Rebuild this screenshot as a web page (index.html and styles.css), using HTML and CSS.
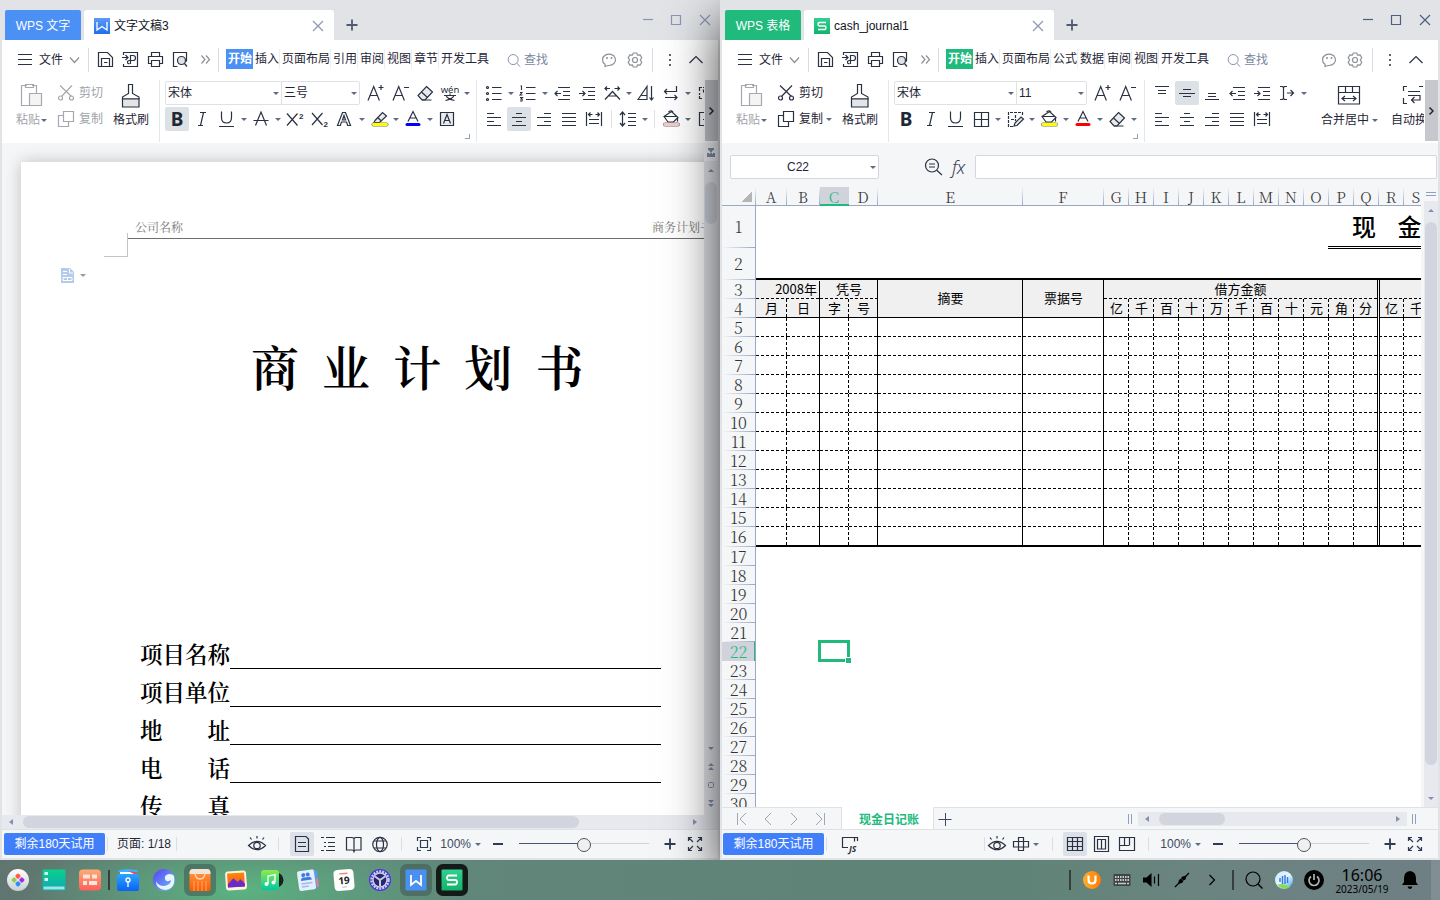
FILE: index.html
```html
<!DOCTYPE html>
<html lang="zh-CN">
<head>
<meta charset="utf-8">
<title>WPS Office</title>
<link rel="stylesheet" href="styles.css">
</head>
<body>
<svg class="sprite" aria-hidden="true">
  <defs>
    <linearGradient id="gw" x1="0" y1="0" x2="0" y2="1"><stop offset="0" stop-color="#5b9bf8"/><stop offset="1" stop-color="#1f6fe8"/></linearGradient>
    <linearGradient id="gs" x1="0" y1="0" x2="0" y2="1"><stop offset="0" stop-color="#33cf90"/><stop offset="1" stop-color="#11b36c"/></linearGradient>
    <linearGradient id="ggreen" x1="0" y1="0" x2="0" y2="1"><stop offset="0" stop-color="#0ad18b"/><stop offset="1" stop-color="#0fa8b8"/></linearGradient>
    <linearGradient id="gcoral" x1="0" y1="0" x2="0" y2="1"><stop offset="0" stop-color="#ffab74"/><stop offset="1" stop-color="#ff5f5c"/></linearGradient>
    <linearGradient id="gblue" x1="0" y1="0" x2="0" y2="1"><stop offset="0" stop-color="#2aa5ff"/><stop offset="1" stop-color="#0b62f4"/></linearGradient>
    <linearGradient id="gwave" x1="0" y1="0" x2="1" y2="1"><stop offset="0" stop-color="#5a3ff0"/><stop offset="1" stop-color="#69c4ff"/></linearGradient>
    <linearGradient id="gbag" x1="0" y1="0" x2="0" y2="1"><stop offset="0" stop-color="#ff9a45"/><stop offset="1" stop-color="#ff5a00"/></linearGradient>
    <linearGradient id="gpic" x1="0" y1="0" x2="0" y2="1"><stop offset="0" stop-color="#ff8a00"/><stop offset="1" stop-color="#f0503c"/></linearGradient>
    <linearGradient id="gmus" x1="0" y1="0" x2="0" y2="1"><stop offset="0" stop-color="#8cec4e"/><stop offset="1" stop-color="#00c8a0"/></linearGradient>
    <linearGradient id="gball" x1="0" y1="0" x2="0" y2="1"><stop offset="0" stop-color="#ffffff"/><stop offset="1" stop-color="#c9cfd1"/></linearGradient>
    <linearGradient id="gvoice" x1="0" y1="0" x2="1" y2="1"><stop offset="0" stop-color="#c5e7ff"/><stop offset=".5" stop-color="#e8f7ff"/><stop offset="1" stop-color="#2fa0f5"/></linearGradient>
    <linearGradient id="gu" x1="0" y1="0" x2="1" y2="0"><stop offset="0" stop-color="#ffae2b"/><stop offset="1" stop-color="#ff7a00"/></linearGradient>
  </defs>
  <symbol id="menu" viewBox="0 0 24 24"><path d="M5 6.500h14M5 11.500h14M5 16.500h14"/></symbol>
  <symbol id="chev" viewBox="0 0 24 24"><path d="M7 9.500l4.500 5 4.500-5"/></symbol>
  <symbol id="save" viewBox="0 0 24 24"><path d="M5.500 4.500h9l5 5v9h-14zM8.500 18.500v-8h8v8M11 14.500h3.500"/></symbol>
  <symbol id="pdf" viewBox="0 0 24 24"><path d="M5.500 7V4.500h14v14h-14V16M4 9.500h6M7.500 7l2.500 2.500L7.500 12M12.500 16v-8.500H15q2.500 0 2.500 2.500T15 12.500h-3.500q-2 0-2 1.800t2 1.200"/></symbol>
  <symbol id="print" viewBox="0 0 24 24"><path d="M8.500 8.500v-4h8v4M8.500 15.500h-3v-7h14v7h-3M8.500 12.500h8v6h-8z"/></symbol>
  <symbol id="preview" viewBox="0 0 24 24"><path d="M9.500 18.500h-4v-14h13v9"/><circle cx="13.500" cy="12.500" r="4" fill="#dfe2e6"/><path d="M16.500 15.500l2.500 3"/></symbol>
  <symbol id="dbl" viewBox="0 0 24 24"><path d="M8.500 7.500l3.500 4-3.500 4M13 7.500l3.500 4-3.500 4"/></symbol>
  <symbol id="find" viewBox="0 0 24 24"><circle cx="11" cy="11.500" r="6"/><path d="M15.500 16l4 4"/></symbol>
  <symbol id="smile" viewBox="0 0 24 24"><path d="M8 18.500v-2.200A6.500 5.700 0 1 1 12 17.500q-1.500 0-4 1z"/><path d="M10 9v2M14.500 9v2" stroke-width="1.500"/></symbol>
  <symbol id="gear" viewBox="0 0 24 24"><path d="M10.300 5h3.400l.9 2.200 2.500-.3 1.700 2.900L17.300 12l1.500 2.200-1.700 2.900-2.500-.3-.9 2.200h-3.400l-.9-2.200-2.500.3-1.700-2.900L6.700 12 5.200 9.800l1.700-2.900 2.500.3z"/><circle cx="12" cy="12" r="2.500"/></symbol>
  <symbol id="dots" viewBox="0 0 24 24"><path d="M12 6v2M12 11v2M12 16v2" stroke-width="2" stroke="#5b6477"/></symbol>
  <symbol id="up" viewBox="0 0 24 24"><path d="M5.500 15l6.500-6.500 6.500 6.500"/></symbol>
  <symbol id="x" viewBox="0 0 24 24"><path d="M7 7l10 10M17 7L7 17"/></symbol>
  <symbol id="min" viewBox="0 0 24 24"><path d="M7 11.500h10"/></symbol>
  <symbol id="max" viewBox="0 0 24 24"><path d="M7.500 7.500h9v9h-9z"/></symbol>
  <symbol id="paste" viewBox="0 0 24 26"><path d="M8 3.500H2.500v20h8M13 3.500h4.500V11M6.500 2.500h8v3h-8z"/><path d="M10.500 11.500h12v12h-12z" fill="#f4f4f5"/></symbol>
  <symbol id="cut" viewBox="0 0 24 24"><path d="M6 4.500l11.500 11M18 4.500L7.500 15.500"/><circle cx="6.500" cy="17" r="2"/><circle cx="17.500" cy="17" r="2"/></symbol>
  <symbol id="copy" viewBox="0 0 24 24"><path d="M9.500 4.500h10v10h-10zM9.500 8.500h-5v11h10v-5"/></symbol>
  <symbol id="brush" viewBox="0 0 24 26"><path d="M9.500 11.500V2.500h4v9l6.500 3.500v2H3.500v-2z" fill="#fff"/><path d="M3.500 17h16.500v8H3.500z" fill="#e3e6e8"/></symbol>
  <symbol id="ap" viewBox="0 0 24 24"><path d="M5 19.500L10.700 5.500l5.700 14M7 14.500h7.500M15.500 6.500h5M18 4v5"/></symbol>
  <symbol id="am" viewBox="0 0 24 24"><path d="M5 19.500L10.700 5.500l5.700 14M7 14.500h7.500M16 6.500h5"/></symbol>
  <symbol id="erase" viewBox="0 0 24 24"><path d="M13.500 5.500l6 5.500-7.500 8H9l-4-4.500z" fill="#e7eaec"/><path d="M8.500 11l6 5.500M9 19h9.500"/></symbol>
  <symbol id="bul" viewBox="0 0 24 24"><circle cx="5.500" cy="6.500" r="1"/><circle cx="5.500" cy="12.500" r="1"/><circle cx="5.500" cy="18.500" r="1"/><path d="M10 6.500h9.500M10 12.500h9.500M10 18.500h9.500"/></symbol>
  <symbol id="num" viewBox="0 0 24 24"><path d="M4.500 5h1v4M4 11.500h2l-2 2.500h2.500M4 16.500h2.500l-1.500 1.500q2 0 1 2H4" stroke-width="1.100"/><path d="M10 6.500h9.500M10 12.500h9.500M10 18.500h9.500"/></symbol>
  <symbol id="out" viewBox="0 0 24 24"><path d="M8 6.500h12M13 10.500h7M13 14.500h7M8 18.500h12M5 12.500h6M7.500 10L5 12.500 7.500 15"/></symbol>
  <symbol id="ind" viewBox="0 0 24 24"><path d="M8 6.500h12M13 10.500h7M13 14.500h7M8 18.500h12M4 12.500h6M7.500 10l2.500 2.500L7.500 15"/></symbol>
  <symbol id="scale" viewBox="0 0 24 24"><path d="M5 18.500l7.500-8 7.500 8M8.500 15h8M5 7.500h5M14.500 7.500h5M7 5.500L5 7.500l2 2M17.500 5.500l2 2-2 2"/></symbol>
  <symbol id="sort" viewBox="0 0 24 24"><path d="M4 18.500l9-13v13zM7.500 14.500H13M17.500 5v14M15.500 16.500l2 2.500 2-2.500"/></symbol>
  <symbol id="wrap" viewBox="0 0 24 24"><path d="M17.500 5v5.500h-12M8 8l-2.500 2.500L8 13M6 16.500h12M15.500 14l2.500 2.500-2.500 2.500"/></symbol>
  <symbol id="tab" viewBox="0 0 24 24"><path d="M6.500 10V6.500H9M10 6.500h4M6.500 12v2M6.500 15v2.500H9M10.500 8.500v3"/></symbol>
  <symbol id="frame" viewBox="0 0 24 24"><path d="M20 5.500H6.500v13H20M10 12.500h2"/></symbol>
  <symbol id="I" viewBox="0 0 24 24"><path d="M10 5.500h6M8 18.500h5M13.500 5.500l-3 13"/></symbol>
  <symbol id="U" viewBox="0 0 24 24"><path d="M6.500 4.500v6q0 5.500 5 5.500t5-5.500v-6M4 19.500h15"/></symbol>
  <symbol id="strike" viewBox="0 0 24 24"><path d="M6.500 18.500L12 5l5.500 13.500M4.500 13.500h15"/></symbol>
  <symbol id="outA" viewBox="0 0 24 24"><path d="M4.500 18.500L9.500 5.500h3l5 13h-2.800l-1.200-3.500h-5L7.300 18.500zM9.500 13h3L11 8.500z"/></symbol>
  <symbol id="hl" viewBox="0 0 24 24"><path d="M8 13.500l7.500-8 4 3.500-7 6.500H7z" fill="#e7eaec"/><path d="M10.500 10.500l4 3.500"/><path d="M6.500 17.500h13" stroke="#777" stroke-width="4" stroke-linecap="round"/><path d="M6.500 17.500h13" stroke="#ff0" stroke-width="2.800" stroke-linecap="round"/></symbol>
  <symbol id="fc" viewBox="0 0 24 24"><path d="M7 14.500L12 4.500l5 10M9 11h6"/><path d="M6 17.500h12" class="bar" stroke-width="3" stroke-linecap="round"/></symbol>
  <symbol id="boxA" viewBox="0 0 24 24"><path d="M5.500 5.500h13v13h-13z" fill="#e9ecee"/><path d="M8.500 16.500l3.500-9 3.500 9M10 13.500h4"/></symbol>
  <symbol id="left" viewBox="0 0 24 24"><path d="M5 6.500h7M5 10.500h14M5 14.500h7M5 18.500h14"/></symbol>
  <symbol id="center" viewBox="0 0 24 24"><path d="M9 6.500h6M5 10.500h14M9 14.500h6M5 18.500h14"/></symbol>
  <symbol id="right" viewBox="0 0 24 24"><path d="M12 6.500h7M5 10.500h14M12 14.500h7M5 18.500h14"/></symbol>
  <symbol id="just" viewBox="0 0 24 24"><path d="M5 6.500h14M5 10.500h14M5 14.500h14M5 18.500h14"/></symbol>
  <symbol id="dist" viewBox="0 0 24 24"><path d="M4.500 5v14M19.500 5v14M7 12.500h10M7 16.500h10M6.500 7.500h4M13.500 7.500h4M8.500 5.500l-2 2 2 2M15.500 5.500l2 2-2 2"/></symbol>
  <symbol id="ls" viewBox="0 0 24 24"><path d="M6.500 5v14M4 8l2.500-3L9 8M4 16l2.500 3L9 16M12 6.500h8M12 10.500h8M12 14.500h8M12 18.500h8"/></symbol>
  <symbol id="bucket" viewBox="0 0 24 24"><path d="M5 9.500l7.500-5 6.500 6-4.500 4.500H9z" fill="#fff"/><path d="M5 9.500h12.500M9.500 5q3-2.500 4.500 0M18.500 11v3.500"/><path d="M6 17.500h13" stroke="#777" stroke-width="4" stroke-linecap="round"/><path d="M6 17.500h13" class="bar" stroke-width="2.800" stroke-linecap="round"/></symbol>
  <symbol id="grid4" viewBox="0 0 24 24"><path d="M5.500 5.500h14v14h-14zM12.500 5.500v14M5.500 12.500h14"/></symbol>
  <symbol id="draw" viewBox="0 0 24 24"><path d="M5.500 9v10.500H11M5.500 8V5.500h14V8M8 12.500h5M12.500 8v6" stroke-dasharray="3 1"/><path d="M12 16l6-6 2.500 2-6.500 6.500-3 .5z" fill="#e7eaec"/></symbol>
  <symbol id="vt" viewBox="0 0 24 24"><path d="M5 5.500h14M8 9.500h8M8 12.500h8"/></symbol>
  <symbol id="vm" viewBox="0 0 24 24"><path d="M8 8.500h8M4 12.500h16M8 15.500h8"/></symbol>
  <symbol id="vb" viewBox="0 0 24 24"><path d="M8 12.500h8M8 15.500h8M5 18.500h14"/></symbol>
  <symbol id="dir" viewBox="0 0 24 24"><path d="M5 5.500h2.500l1 1v11l-1 1H5M12 5.500H9.500l-1 1M12 18.500H9.500l-1-1M12 12h6M15.500 9l3 3-3 3"/></symbol>
  <symbol id="merge" viewBox="0 0 24 24"><path d="M1.500 3.500h21v17.500h-21zM1.500 9.500h21M8.500 3.500v6M15.500 3.500v6M5 15.500h14M8 13l-3 2.500L8 18M16 13l3 2.500-3 2.500"/></symbol>
  <symbol id="wraptext" viewBox="0 0 24 24"><path d="M6 3.500H2.500V8M2.500 15v5.500H6M18 3.500h4M7 8.500h12M7 12.500h12v4.500h-8M13.500 14l-3 3 3 3"/></symbol>
  <symbol id="eye" viewBox="0 0 24 24"><path d="M3.500 13.500Q12 5 20.500 13.500 12 22 3.500 13.500zM12 4v2.500M5 5.500l1.500 2M19 5.500l-1.500 2"/><circle cx="12" cy="13.500" r="3.200"/></symbol>
  <symbol id="pagev" viewBox="0 0 24 24"><path d="M5.500 4.500H16l2.500 2.500v12.500h-13zM8 10.500h8M8 14.500h8"/></symbol>
  <symbol id="outl" viewBox="0 0 24 24"><path d="M5 5.500h3M10 5.500h9M8 10.500h2M12 10.500h7M8 14.500h2M12 14.500h7M5 18.500h3M10 18.500h9"/></symbol>
  <symbol id="book" viewBox="0 0 24 24"><path d="M12 6.500q-1-1-2.500-1h-5v12.500H10q1.500 0 2 1.500.500-1.500 2-1.500h5V5.500h-5q-1.500 0-2 1v13"/></symbol>
  <symbol id="globe" viewBox="0 0 24 24"><circle cx="12" cy="12.500" r="7.200"/><ellipse cx="12" cy="12.500" rx="3.500" ry="7.200"/><path d="M6 9h12M6 16h12"/></symbol>
  <symbol id="fit" viewBox="0 0 24 24"><path d="M5.500 9V5.500H9M15 5.500h3.500V9M18.500 15v3.500H15M9 18.500H5.500V15M8.500 8.500h7v7h-7z"/></symbol>
  <symbol id="full" viewBox="0 0 24 24"><path d="M5.500 9V5.500H9M5.500 5.500L10 10M15 5.500h3.500V9M18.500 5.500L14 10M18.500 15v3.500H15M18.500 18.500L14 14M9 18.500H5.500V15M5.500 18.500L10 14"/></symbol>
  <symbol id="minus" viewBox="0 0 24 24"><path d="M7 12h10" stroke-width="2"/></symbol>
  <symbol id="plus" viewBox="0 0 24 24"><path d="M6.500 12h11M12 6.500v11" stroke-width="1.800"/></symbol>
  <symbol id="cross" viewBox="0 0 24 24"><path d="M9.500 5.500h5v13h-5zM4.500 9.500h15v5.500h-15z"/></symbol>
  <symbol id="tbl" viewBox="0 0 24 24"><path d="M4.500 5.500h15v13h-15zM4.500 9.500h15M4.500 14.500h15M9.500 5.500v13M14.500 5.500v13"/></symbol>
  <symbol id="pgl" viewBox="0 0 24 24"><path d="M5.500 4.500h14v15h-14zM8.500 7.500h8v9.500h-8zM12.500 7.500v9.500"/></symbol>
  <symbol id="brk" viewBox="0 0 24 24"><path d="M4.500 5.500h15v13h-15zM4.500 13.500h9.500M14.500 5.500v8M9.500 5.500v8"/></symbol>
  <symbol id="zoomo" viewBox="0 0 24 24"><circle cx="11" cy="10.500" r="6.500"/><path d="M16 15.500l5 4.500M8 9h6M8 12h6"/></symbol>
</svg>

<main class="desktop">
  <section class="window writer">
    <header class="titlebar">
      <span class="home">WPS 文字</span>
      <span class="filetab"><svg class="logo" viewBox="0 0 16 16"><path d="M0 0h16v16H0z" fill="url(#gw)"/><path d="M3 4v8l5-3.500L13 12V4" fill="none" stroke="#fff" stroke-width="1.300"/></svg>文字文稿3<svg class="ic close"><use href="#x"/></svg></span>
      <svg class="ic newtab"><use href="#plus"/></svg>
      <div class="winbtns"><svg class="ic"><use href="#min"/></svg><svg class="ic"><use href="#max"/></svg><svg class="ic big"><use href="#x"/></svg></div>
    </header>
    <nav class="menubar">
      <svg class="ic thin"><use href="#menu"/></svg><span class="file">文件</span><svg class="ic grey"><use href="#chev"/></svg>
      <i class="vsep"></i>
      <div class="quick"><svg class="ic"><use href="#save"/></svg><svg class="ic"><use href="#pdf"/></svg><svg class="ic"><use href="#print"/></svg><svg class="ic"><use href="#preview"/></svg><svg class="ic grey"><use href="#dbl"/></svg></div>
      <i class="vsep q"></i>
      <div class="tabs"><b>开始</b><span>插入</span><span>页面布局</span><span>引用</span><span>审阅</span><span>视图</span><span>章节</span><span>开发工具</span></div>
      <div class="search"><svg class="ic"><use href="#find"/></svg>查找</div>
      <div class="opts"><svg class="ic grey"><use href="#smile"/></svg><svg class="ic grey"><use href="#gear"/></svg><i class="vsep"></i><svg class="ic"><use href="#dots"/></svg><svg class="ic"><use href="#up"/></svg></div>
    </nav>
    <div class="ribbon">
      <div class="g-paste off"><svg class="big-ic"><use href="#paste"/></svg><span>粘贴<i class="dd"></i></span></div>
      <div class="g-copy off"><span><svg class="ic"><use href="#cut"/></svg>剪切</span><span><svg class="ic"><use href="#copy"/></svg>复制</span></div>
      <div class="g-brush"><svg class="big-ic"><use href="#brush"/></svg><span>格式刷</span></div>
      <i class="rsep"></i>
      <div class="grp">
        <div class="row"><div class="combo"><span>宋体<i class="dd"></i></span><span>三号<i class="dd"></i></span></div>
          <svg class="ic"><use href="#ap"/></svg><svg class="ic"><use href="#am"/></svg><svg class="ic"><use href="#erase"/></svg><svg class="ic" viewBox="0 0 24 24"><text x="12" y="11.500" text-anchor="middle" class="wentxt">wén</text><path d="M6 14.500h12M12 12.500v2M8 14.500q1.500 3.500 8.500 5M16 14.500q-1.500 3.500-8.500 5" stroke-width="1.100"/></svg><i class="dd"></i></div>
        <div class="row"><em class="bold on">B</em><svg class="ic"><use href="#I"/></svg><svg class="ic"><use href="#U"/></svg><i class="dd"></i><svg class="ic"><use href="#strike"/></svg><i class="dd"></i><svg class="ic" viewBox="0 0 24 24"><path d="M4 6.500l10.500 12M14.500 6.500L4 18.500"/><text x="16" y="11.500" class="two">2</text></svg><svg class="ic" viewBox="0 0 24 24"><path d="M4 6l10.500 12M14.500 6L4 18"/><text x="15.500" y="20" class="two">2</text></svg><svg class="ic"><use href="#outA"/></svg><i class="dd"></i><svg class="ic"><use href="#hl"/></svg><i class="dd"></i><svg class="ic cblue"><use href="#fc"/></svg><i class="dd"></i><svg class="ic"><use href="#boxA"/></svg></div>
        <i class="corner"></i>
      </div>
      <i class="rsep"></i>
      <div class="grp para">
        <div class="row"><svg class="ic"><use href="#bul"/></svg><i class="dd"></i><svg class="ic"><use href="#num"/></svg><i class="dd"></i><svg class="ic"><use href="#out"/></svg><svg class="ic"><use href="#ind"/></svg><svg class="ic"><use href="#scale"/></svg><i class="dd"></i><svg class="ic"><use href="#sort"/></svg><svg class="ic"><use href="#wrap"/></svg><i class="dd"></i><svg class="ic"><use href="#tab"/></svg></div>
        <div class="row"><svg class="ic"><use href="#left"/></svg><svg class="ic on"><use href="#center"/></svg><svg class="ic"><use href="#right"/></svg><svg class="ic"><use href="#just"/></svg><svg class="ic"><use href="#dist"/></svg><i class="msep"></i><svg class="ic"><use href="#ls"/></svg><i class="dd"></i><i class="msep"></i><svg class="ic cred"><use href="#bucket"/></svg><i class="dd"></i><svg class="ic"><use href="#frame"/></svg></div>
      </div>
      <div class="more"><svg viewBox="0 0 13 61"><path d="M4.500 27.500l3.500 3.500-3.500 3.500"/></svg></div>
    </div>
    <div class="docarea">
      <div class="paperwrap">
        <article class="paper">
          <div class="dochead"><span>公司名称</span><span>商务计划书</span></div>
          <i class="cropmark"></i>
          <div class="pastetag"><svg viewBox="0 0 13 15"><path d="M0 0h9l4 4v11H0z" fill="#b5cbec"/><path d="M2 3.500h4M2 6.500h4M2 9.500h9v3H2zM8.500 1v4H12M6.500 9v3" fill="none" stroke="#fff"/></svg><i class="dd"></i></div>
          <h1>商业计划书</h1>
          <dl class="fields">
            <div><dt>项目名称</dt><dd></dd></div>
            <div><dt>项目单位</dt><dd></dd></div>
            <div><dt><span>地</span><span>址</span></dt><dd></dd></div>
            <div><dt><span>电</span><span>话</span></dt><dd></dd></div>
            <div><dt><span>传</span><span>真</span></dt><dd></dd></div>
          </dl>
        </article>
      </div>
      <div class="vscroll">
        <svg class="tip" viewBox="0 0 14 18"><path d="M4 5h6v2H9L7 10 5 7H4zM3 10h2v1h1v-1h2v1h1v-1h2v4H3z"/></svg>
        <svg class="arr" viewBox="0 0 14 18"><path d="M4 11h6L7 8z"/></svg>
        <i class="thumb"></i>
        <svg class="low" viewBox="0 0 14 76"><path d="M4 8h6l-3 3zM4 27l3-3 3 3zM4 31l3-3 3 3zM4 61h6l-3 3zM4 65h6l-3 3z"/><rect x="4.500" y="43.500" width="5" height="5" rx="1"/></svg>
      </div>
    </div>
    <div class="hscroll"><i class="tl"></i><i class="thumb"></i><i class="tr"></i></div>
    <footer class="status">
      <a class="trial">剩余180天试用</a><i class="ssep"></i><span class="pages">页面: 1/18</span><i class="ssep"></i>
      <svg class="ic eye"><use href="#eye"/></svg><i class="ssep e"></i>
      <div class="views"><svg class="ic on"><use href="#pagev"/></svg><svg class="ic"><use href="#outl"/></svg><svg class="ic"><use href="#book"/></svg><svg class="ic"><use href="#globe"/></svg></div>
      <div class="zoom"><i class="ssep"></i><svg class="ic fit"><use href="#fit"/></svg><span>100%</span><i class="dd"></i><svg class="ic"><use href="#minus"/></svg><i class="slider"></i><svg class="ic"><use href="#plus"/></svg><svg class="ic"><use href="#full"/></svg></div>
    </footer>
  </section>

  <section class="window sheet">
    <header class="titlebar">
      <span class="home">WPS 表格</span>
      <span class="filetab"><svg class="logo" viewBox="0 0 16 16"><path d="M0 0h16v16H0z" fill="url(#gs)"/><path d="M12 4.500H5.500q-1.500 0-1.500 1.700T5.500 8h5q1.500 0 1.500 1.800t-1.500 1.700H4" fill="none" stroke="#fff" stroke-width="1.300"/></svg>cash_journal1<svg class="ic close"><use href="#x"/></svg></span>
      <svg class="ic newtab"><use href="#plus"/></svg>
      <div class="winbtns"><svg class="ic"><use href="#min"/></svg><svg class="ic"><use href="#max"/></svg><svg class="ic big"><use href="#x"/></svg></div>
    </header>
    <nav class="menubar">
      <svg class="ic thin"><use href="#menu"/></svg><span class="file">文件</span><svg class="ic grey"><use href="#chev"/></svg>
      <i class="vsep"></i>
      <div class="quick"><svg class="ic"><use href="#save"/></svg><svg class="ic"><use href="#pdf"/></svg><svg class="ic"><use href="#print"/></svg><svg class="ic"><use href="#preview"/></svg><svg class="ic grey"><use href="#dbl"/></svg></div>
      <i class="vsep q"></i>
      <div class="tabs"><b>开始</b><span>插入</span><span>页面布局</span><span>公式</span><span>数据</span><span>审阅</span><span>视图</span><span>开发工具</span></div>
      <div class="search"><svg class="ic"><use href="#find"/></svg>查找</div>
      <div class="opts"><svg class="ic grey"><use href="#smile"/></svg><svg class="ic grey"><use href="#gear"/></svg><i class="vsep"></i><svg class="ic"><use href="#dots"/></svg><svg class="ic"><use href="#up"/></svg></div>
    </nav>
    <div class="ribbon">
      <div class="g-paste off"><svg class="big-ic"><use href="#paste"/></svg><span>粘贴<i class="dd"></i></span></div>
      <div class="g-copy"><span><svg class="ic"><use href="#cut"/></svg>剪切</span><span><svg class="ic"><use href="#copy"/></svg>复制<i class="dd"></i></span></div>
      <div class="g-brush"><svg class="big-ic"><use href="#brush"/></svg><span>格式刷</span></div>
      <i class="rsep"></i>
      <div class="grp">
        <div class="row"><div class="combo"><span>宋体<i class="dd"></i></span><span>11<i class="dd"></i></span></div>
          <svg class="ic"><use href="#ap"/></svg><svg class="ic"><use href="#am"/></svg></div>
        <div class="row"><em class="bold">B</em><svg class="ic"><use href="#I"/></svg><svg class="ic"><use href="#U"/></svg><svg class="ic"><use href="#grid4"/></svg><i class="dd"></i><svg class="ic"><use href="#draw"/></svg><i class="dd"></i><svg class="ic cyel"><use href="#bucket"/></svg><i class="dd"></i><svg class="ic cred"><use href="#fc"/></svg><i class="dd"></i><svg class="ic"><use href="#erase"/></svg><i class="dd"></i></div>
        <i class="corner"></i>
      </div>
      <i class="rsep"></i>
      <div class="grp para">
        <div class="row"><svg class="ic"><use href="#vt"/></svg><svg class="ic on"><use href="#vm"/></svg><svg class="ic"><use href="#vb"/></svg><svg class="ic"><use href="#out"/></svg><svg class="ic"><use href="#ind"/></svg><svg class="ic"><use href="#dir"/></svg><i class="dd"></i></div>
        <div class="row"><svg class="ic"><use href="#left"/></svg><svg class="ic"><use href="#center"/></svg><svg class="ic"><use href="#right"/></svg><svg class="ic"><use href="#just"/></svg><svg class="ic"><use href="#dist"/></svg></div>
      </div>
      <div class="g-tall"><svg class="ic"><use href="#merge"/></svg><span>合并居中<i class="dd"></i></span></div>
      <div class="g-tall wt"><svg class="ic"><use href="#wraptext"/></svg><span>自动换行</span></div>
      <div class="more"><svg viewBox="0 0 13 61"><path d="M4.500 27.500l3.500 3.500-3.500 3.500"/></svg></div>
    </div>
    <div class="formula"><div class="namebox">C22<i class="dd"></i></div><svg class="ic"><use href="#zoomo"/></svg><span class="fx">fx</span><div class="input"></div></div>
    <div class="gridarea">
      <div class="gridmain">
        <div class="colheads" id="cols"><i class="allsel"></i></div>
        <div class="gridbody">
          <div class="rowheads" id="rows"></div>
          <div class="cells">
            <div class="r1"><span>现</span><span>金</span></div>
            <div class="r2"></div>
            <div class="thead" id="thead"></div>
            <div id="tbody"></div>
            <i class="cursor"></i>
          </div>
        </div>
      </div>
      <div class="vscroll"><i class="split"></i><svg class="arr" viewBox="0 0 14 18"><path d="M4 11h6L7 8z"/></svg><i class="thumb"></i><svg class="arr end" viewBox="0 0 14 18"><path d="M4 8h6l-3 3z"/></svg></div>
    </div>
    <div class="sheettabs">
      <div class="navs"><svg viewBox="0 0 16 16"><path d="M3.500 2v12M12 2L6 8l6 6"/></svg><svg viewBox="0 0 16 16"><path d="M11 2L5 8l6 6"/></svg><svg viewBox="0 0 16 16"><path d="M5 2l6 6-6 6"/></svg><svg viewBox="0 0 16 16"><path d="M4 2l6 6-6 6M12.500 2v12"/></svg></div>
      <b class="tabname">现金日记账</b>
      <svg class="addtab" viewBox="0 0 16 16"><path d="M1.500 8.500h13M8.500 2v13"/></svg>
      <i class="grip"></i><div class="hscroll"><i class="tl"></i><i class="thumb"></i><i class="tr"></i></div><i class="grip"></i>
    </div>
    <footer class="status">
      <a class="trial">剩余180天试用</a><i class="ssep"></i><svg class="ic js" viewBox="0 0 24 24"><path d="M10 15.500H4.500v-10h15V9M16.500 5.500v4"/><text x="11" y="19.500" class="jstxt">JS</text></svg>
      <i class="ssep"></i><svg class="ic eye"><use href="#eye"/></svg><svg class="ic"><use href="#cross"/></svg><i class="dd"></i><i class="ssep e"></i>
      <div class="views"><svg class="ic on"><use href="#tbl"/></svg><svg class="ic"><use href="#pgl"/></svg><svg class="ic"><use href="#brk"/></svg></div>
      <div class="zoom"><i class="ssep"></i><span>100%</span><i class="dd"></i><svg class="ic"><use href="#minus"/></svg><i class="slider"></i><svg class="ic"><use href="#plus"/></svg><svg class="ic"><use href="#full"/></svg></div>
    </footer>
  </section>
</main>

<div class="taskbar">
  <div class="dock">
    <span><svg viewBox="0 0 24 24"><circle cx="12" cy="12" r="11" fill="url(#gball)"/><g transform="rotate(45 12 12)"><rect x="7" y="7" width="4.500" height="4.500" rx="1.500" fill="#ff5c4d"/><rect x="12.500" y="7" width="4.500" height="4.500" rx="1.500" fill="#a42be0"/><rect x="7" y="12.500" width="4.500" height="4.500" rx="1.500" fill="#8ccf52"/><rect x="12.500" y="12.500" width="4.500" height="4.500" rx="1.500" fill="#2b8df5"/></g></svg></span>
    <span><svg viewBox="0 0 24 24"><rect x=".500" y="1.500" width="23" height="21" rx="1" fill="url(#ggreen)"/><path d="M2.500 4h3.500v3H2.500zM2.500 10h3.500v3H2.500z" fill="#dffcf2"/><path d="M1.500 18.500h21v3h-21z" fill="#9be6dd"/></svg></span>
    <span><svg viewBox="0 0 24 24"><rect x="1" y="1.500" width="22" height="21" rx="4" fill="url(#gcoral)"/><path d="M5 6.500h7v4H5zM14 6.500h5v4h-5zM5 13h4v4H5zM11 13h8v4h-8z" fill="#ffe6da"/></svg></span>
    <i class="tsep"></i>
    <span><svg viewBox="0 0 24 24"><path d="M2 4q0-2 2-2l8-1 8 1q2 0 2 2z" fill="#37b4ff"/><path d="M4 4h16v4H4z" fill="#fff"/><path d="M12 3l8 1v3z" fill="#f3455d"/><rect x="1" y="6" width="22" height="17" rx="2" fill="url(#gblue)"/><circle cx="12" cy="12" r="2" fill="none" stroke="#fff" stroke-width="1.300"/><path d="M12 14v5" fill="none" stroke="#fff" stroke-width="1.300"/></svg></span>
    <span><svg viewBox="0 0 24 24"><circle cx="12" cy="12" r="11" fill="url(#gwave)"/><path d="M22 8q2 13-9 14Q4 21 4 13q2 5 8 5 7-1 7-6-5 3-6-1t4-5q4 0 5 2" fill="#eaf6ff"/></svg></span>
    <span class="run"><svg viewBox="0 0 24 24"><rect x="1.500" y="2" width="21" height="21" rx="2" fill="url(#gbag)"/><path d="M1.500 6q0-5 3-5h15q3 0 3 5z" fill="#f1e6dc"/><path d="M7 4q0 7 5 7t5-7" fill="none" stroke="#ffd9bd" stroke-width="1.300"/><path d="M6 13v10M10 13v10M14 13v10M18 13v10" stroke="#ffa873" stroke-width="1"/></svg></span>
    <span><svg viewBox="0 0 24 24"><g transform="rotate(-4 12 12)"><rect x="1.500" y="3" width="21" height="19" rx="3" fill="#fff3e4"/><path d="M3.500 5h17v14h-17z" fill="url(#gpic)"/><path d="M3.500 16l6-6 4 4 3-2.500 4 4.500v3h-17z" fill="#6a2bc4"/></g></svg></span>
    <span><svg viewBox="0 0 24 24"><circle cx="16" cy="12" r="7.500" fill="#17211f"/><rect x="1" y="2" width="18" height="20" rx="3" fill="url(#gmus)"/><path d="M8 15.500V8l7-1.500v7.500" fill="none" stroke="#fff" stroke-width="1.400"/><circle cx="6.500" cy="16" r="2" fill="#fff"/><circle cx="13.500" cy="14.500" r="2" fill="#fff"/></svg></span>
    <span><svg viewBox="0 0 24 24"><g transform="rotate(-8 12 12)"><rect x="5" y="3" width="17" height="18" rx="2" fill="#5a9af0"/><path d="M20 12h2v8h-2z" fill="#f57b86"/><rect x="2" y="2" width="17" height="20" rx="2" fill="#e5eefc"/><circle cx="8" cy="6.500" r="2" fill="#3f7ce0"/><circle cx="12.500" cy="6.500" r="2" fill="#3f7ce0"/><path d="M5 12q0-3 3-3h5q3 0 3 3z" fill="#3f7ce0"/><path d="M5 15h11M5 18h7" stroke="#9bbcf0" stroke-width="1.500"/></g></svg></span>
    <span><svg viewBox="0 0 24 24"><g transform="rotate(-5 12 12)"><rect x="2" y="1.500" width="20" height="21" rx="4" fill="#fff"/><path d="M8 5.500h8" stroke="#f08070" stroke-width="1.500"/><text x="12" y="16" text-anchor="middle" class="daynum">19</text><path d="M9.500 19h5" stroke="#bbb"/></g></svg></span>
    <span><svg viewBox="0 0 24 24"><circle cx="12" cy="12" r="11" fill="#4634d8"/><circle cx="12" cy="12" r="8.500" fill="#2b2a6e" stroke="#c9cbf0" stroke-width="2.500" stroke-dasharray="2 1"/><circle cx="12" cy="12" r="7" fill="#26286a" stroke="#c9cbf0" stroke-width="1.500"/><path d="M12 12v6M12 12L7 8.500M12 12l5-3.500" stroke="#c9cbf0" stroke-width="2"/></svg></span>
    <span class="run"><svg viewBox="0 0 24 24"><rect x="1.500" y="1.500" width="21" height="21" rx="1" fill="#4a90f2"/><path d="M7 7v10l5-4 5 4V7" fill="none" stroke="#fff" stroke-width="1.800"/></svg></span>
    <span class="active"><svg viewBox="0 0 24 24"><rect x="1.500" y="1.500" width="21" height="21" rx="1" fill="url(#gs)"/><path d="M17 7.500H9q-2 0-2 2.200T9 12h6q2 0 2 2.200t-2 2.300H7" fill="none" stroke="#fff" stroke-width="1.800"/></svg></span>
  </div>
  <div class="tray">
    <i class="tsep"></i>
    <svg viewBox="0 0 20 20"><circle cx="10" cy="10" r="9" fill="url(#gu)"/><path d="M6.500 5.500v4.500q0 3.500 3.500 3.500t3.500-3.500V5.500" fill="none" stroke="#fff" stroke-width="2.200"/></svg>
    <svg viewBox="0 0 20 20"><rect x="1.500" y="4" width="17" height="12" rx="1" fill="#3f4446"/><path d="M3 7h14M3 10h14" stroke="#c4ccca" stroke-width="1.800" stroke-dasharray="1.500 1"/><path d="M3 13.500h2M6 13.500h8M15 13.500h2" stroke="#c4ccca" stroke-width="1.500"/></svg>
    <svg viewBox="0 0 20 20"><path d="M1 7.500h3.500l5-4.500v14l-5-4.500H1z"/><path d="M12.500 6.500v7M16.500 4v12" stroke="#000" stroke-width="1.200"/></svg>
    <svg viewBox="0 0 20 20"><path d="M3 17l5-5M12 8l5-5" stroke="#000" stroke-width="1.300"/><path d="M6 14l1-4 2-1.500 2.500 2.500-1.500 2zM14.500 5.500l-1 4-2 1L9 8l1.500-1.500z"/></svg>
    <svg viewBox="0 0 20 20"><path d="M7.500 5l5 5-5 5" fill="none" stroke="#000" stroke-width="1.200"/></svg>
    <i class="tsep s2"></i>
    <svg viewBox="0 0 20 20"><circle cx="9" cy="9" r="7" fill="none" stroke="#000" stroke-width="1.200"/><path d="M14 14l4.500 4.500" stroke="#000" stroke-width="1.500"/></svg>
    <svg viewBox="0 0 20 20"><circle cx="10" cy="10" r="9" fill="url(#gvoice)"/><path d="M3 15q6-3 13 2-6 4-13-2z" fill="#8ade4e"/><path d="M6 8v4M8.500 6v8M11 5v9M13.500 7v6" stroke="#3a7be0" stroke-width="1.500"/></svg>
    <svg viewBox="0 0 20 20"><circle cx="10" cy="10" r="10"/><path d="M10 4v6M7 6.500a5 5 0 1 0 6 0" fill="none" stroke="#a9b7b7" stroke-width="1.700"/></svg>
    <div class="clock"><b>16:06</b><span>2023/05/19</span></div>
    <svg class="bell" viewBox="0 0 20 20"><path d="M10 1q6 1 6 7v4l2 3H2l2-3V8q0-6 6-7zM7.500 16.500h5q-1 2.500-2.500 2.500t-2.500-2.500z"/></svg>
    <i class="peek"></i>
  </div>
</div>
<script src="app.js"></script>
</body>
</html>
```
FILE: app.js
```js
const widths = [31, 33, 29, 29, 145, 81, 25, 25, 25, 25, 25, 25, 25, 25, 25, 25, 25, 25, 25];
const letters = 'ABCDEFGHIJKLMNOPQRS';

function add(parent, tag, cls, text) {
  const el = document.createElement(tag);
  el.className = cls;
  if (text) el.textContent = text;
  parent.appendChild(el);
  return el;
}

const cols = document.getElementById('cols');
widths.forEach((w, i) => {
  const c = add(cols, 'span', i === 2 ? 'sel' : '', letters[i]);
  c.style.width = w + 'px';
});

const rows = document.getElementById('rows');
for (let r = 1; r <= 30; r++) {
  const cell = add(rows, 'span', r === 22 ? 'sel' : '', String(r));
  cell.style.height = (r === 1 ? 42 : r === 2 ? 32 : r === 16 ? 20 : 19) + 'px';
}

// Right edges: s = solid, d = dashed, w = double
const edges = 'dsdsssddddddddddwdd';
const template = widths.map(w => w + 'px').join(' ');

const thead = document.getElementById('thead');
thead.style.gridTemplateColumns = template;
function head(text, col, span, row, rowSpan, cls) {
  const el = add(thead, 'span', cls, text);
  el.style.gridColumn = col + ' / span ' + span;
  el.style.gridRow = row + ' / span ' + rowSpan;
}
head('2008年', 1, 2, 1, 1, 's bd end');
head('凭号', 3, 2, 1, 1, 's bd');
head('摘要', 5, 1, 1, 2, 's bs');
head('票据号', 6, 1, 1, 2, 's bs');
head('借方金额', 7, 11, 1, 1, 'w bd');
head('', 18, 2, 1, 1, 'bd');
['月', '日', '字', '号'].forEach((t, i) => head(t, i + 1, 1, 2, 1, edges[i] + ' bs'));
[...'亿千百十万千百十元角分亿千'].forEach((t, i) => head(t, i + 7, 1, 2, 1, edges[i + 6] + ' bs'));

const tbody = document.getElementById('tbody');
for (let r = 5; r <= 16; r++) {
  const row = add(tbody, 'div', r === 16 ? 'trow last' : 'trow');
  row.style.gridTemplateColumns = template;
  widths.forEach((w, i) => add(row, 'span', edges[i] + (r === 16 ? '' : ' bd')));
}
```
FILE: styles.css
```css
* { box-sizing: border-box; }
body { margin: 0; width: 1440px; height: 900px; overflow: hidden; font: 12px/16px "Liberation Sans", "Noto Sans CJK SC", sans-serif; color: #1f2636; }
i, em { font-style: normal; }
.sprite { position: absolute; width: 0; height: 0; }
.desktop { display: grid; grid-template-columns: 720px 720px; height: 860px; overflow: hidden; background: #e2e3e7; }
.window { display: flex; flex-direction: column; width: 720px; height: 860px; padding: 0 2px 2px; background: #e2e3e7; overflow: hidden; --accent: #4a90f5; }
.sheet { --accent: #21ba7d; position: relative; box-shadow: 0 20px 48px rgba(0,0,0,.76); }
.ic { width: 24px; height: 24px; flex: none; fill: none; stroke: #2a3142; stroke-width: 1.2; }
.grey { stroke: #8b9099; }
.on { background: #dce1e6; border-radius: 2px; }
.dd { flex: none; width: 8px; height: 24px; display: flex; align-items: center; justify-content: center; }
.dd::after { content: ""; border: 3px solid transparent; border-top-color: #5f6b80; border-bottom: 0; }
.wentxt { font: 9.5px "Noto Sans", sans-serif; fill: #2a3142; stroke: none; }
.two { font: 700 8px "Liberation Sans", sans-serif; fill: #2a3142; stroke: none; }
.jstxt { font: italic 700 8.5px "Open Sans", sans-serif; fill: #2a3142; stroke: none; }

.titlebar { display: flex; height: 40px; flex: none; padding: 10px 0 0 3px; }
.home { width: 76px; background: var(--accent); color: #fff; border-radius: 2px 2px 0 0; line-height: 33px; height: 30px; text-align: center; }
.filetab { display: flex; align-items: center; width: 250px; margin-left: 3px; padding: 2px 4px 0 10px; background: #fff; border-radius: 3px 3px 0 0; color: #10141e; }
.logo { width: 16px; height: 16px; margin-right: 4px; }
.close { margin-left: auto; stroke: #8c98b0; }
.newtab { margin: 3px 0 0 6px; stroke: #4d5b75; }
.winbtns { display: flex; gap: 4px; margin: -2px 1px 0 auto; }
.winbtns .ic { stroke: #4f5f7f; }
.winbtns .big { margin-left: 1px; }
.writer .winbtns .ic { stroke: #8a97b4; }

.menubar { display: flex; align-items: center; height: 37px; flex: none; background: #fff; padding: 2px 10px 0 11px; }
.thin { stroke-width: 1; }
.file { margin: 0 0 0 2px; }
.vsep { width: 1px; height: 24px; background: #d9dce2; margin-left: 1px; }
.quick { display: flex; gap: 1px; margin-left: 4px; }
.vsep.q { margin-left: 1px; }
.tabs { display: flex; margin: -1px 0 0 7px; height: 20px; }
.tabs > * { padding: 0 1px 0 2px; line-height: 21px; font-weight: 400; box-shadow: inset -1px 0 #eceef1; white-space: nowrap; width: 27px; }
.tabs > :nth-child(3), .tabs > :nth-child(8) { width: 51px; }
.tabs > :last-child { box-shadow: none; }
.tabs b { background: var(--accent); color: #fff; font-weight: 700; box-shadow: none; }
.search { display: flex; align-items: center; margin-left: 14px; color: #7a86a0; }
.search .ic { stroke: #8492b0; width: 20px; }
.opts { display: flex; align-items: center; margin-left: auto; gap: 2px; }
.opts .vsep { margin: 0 3px; }

.ribbon { display: flex; height: 66px; flex: none; background: #fff; padding: 3px 0 2px 14px; position: relative; overflow: hidden; }
.ribbon > * { flex: none; }
.big-ic { width: 24px; height: 26px; fill: none; stroke: #2a3142; stroke-width: 1.2; display: block; }
.off { color: #a0a4ab; }
.off .ic, .off .big-ic { stroke: #a5a8ae; }
.g-paste { width: 36px; }
.g-paste .big-ic { margin: 2px 0 4px 3px; }
.g-paste span, .g-brush span, .g-tall span { display: flex; height: 16px; align-items: center; white-space: nowrap; }
.g-copy { width: 57px; margin-left: 2px; }
.g-copy > span { display: flex; align-items: center; height: 24px; margin-top: 1px; white-space: nowrap; }
.g-copy > span + span { margin-top: 2px; }
.g-copy .ic { margin-right: 1px; }
.g-copy .dd { margin-left: 2px; }
.g-brush { width: 36px; margin-left: 2px; }
.sheet .g-brush { margin-left: 11px; }
.g-brush .big-ic { margin: 2px 0 4px 6px; }
.rsep { width: 1px; height: 62px; margin: 0 5px 0 10px; background: #e4e6ea; }
.grp { position: relative; margin-top: 1px; }
.row { display: flex; gap: 1px; height: 24px; }
.row + .row { margin-top: 2px; }
.combo { display: flex; height: 24px; width: 195px; margin-right: 2px; border: 1px solid #dfe1e6; border-radius: 2px; }
.combo span { display: flex; align-items: center; justify-content: space-between; padding: 0 1px 0 2px; width: 115px; }
.combo span + span { flex: 1; border-left: 1px solid #dfe1e6; }
.sheet .combo { width: 193px; }
.sheet .combo span:first-child { width: 121px; }
.corner { position: absolute; right: 1px; bottom: 2px; width: 5px; height: 5px; border: solid #8fa0bb; border-width: 0 1px 1px 0; }
.grp + .rsep { margin-left: 5px; }
.bold { width: 24px; height: 24px; font: 700 19px/24px "Noto Sans", sans-serif; text-align: center; }
.msep { width: 1px; height: 18px; margin: 3px 3px 0 4px; background: #e0e2e6; }
.cblue { --bar: #0000ff; } .cred { --bar: #ff0000; } .cyel { --bar: #ffff00; }
.bar { stroke: var(--bar); }
.writer .cred { --bar: #f7c9c9; }
.g-tall { width: 58px; margin-left: 13px; }
.g-tall .ic { display: block; margin: 3px 0 5px 16px; }
.g-tall .dd { margin-left: 2px; }
.g-tall span { width: 64px; }
.g-tall.wt { margin-left: 12px; width: 48px; }
.g-tall.wt .ic { margin-left: 10px; }
.more { position: absolute; right: 0; top: 3px; width: 14px; height: 61px; background: #c6c8ce; border-left: 1px solid #fff; }
.more svg { display: block; width: 13px; height: 61px; fill: none; stroke: #222838; stroke-width: 1.5; }

.docarea { display: flex; flex: 1; min-height: 0; background: #f5f6f8; }
.paperwrap { flex: 1; overflow: hidden; padding: 19px 0 0 19px; }
.paper { width: 794px; height: 800px; background: #fff; box-shadow: 0 0 16px rgba(0,0,0,.22); padding-top: 57px; }
.dochead { display: flex; gap: 469px; margin-left: 106px; padding-left: 8px; height: 20px; border-bottom: 1px solid #6e6e6e; color: #777; white-space: nowrap; font-family: "Noto Serif CJK SC", "Noto Sans CJK SC", serif; font-weight: 400; }
.cropmark { display: block; width: 24px; height: 24px; margin: -6px 0 0 83px; border: solid #c4c4c4; border-width: 0 1px 1px 0; }
.pastetag { display: flex; align-items: center; gap: 5px; height: 16px; margin: 10px 0 0 40px; }
.pastetag svg { width: 13px; height: 15px; }
.pastetag .dd { width: 7px; }
.pastetag .dd::after { border-top-color: #9a9a9a; }
.paper h1 { margin: 47px 0 0 230px; font: 600 48px/72px "Noto Serif CJK SC", "Noto Sans CJK SC", serif; letter-spacing: 23.1px; color: #000; white-space: nowrap; }
.fields { margin: 235px 0 0 119px; width: 521px; color: #000; font: 600 22.5px/32px "Noto Serif CJK SC", "Noto Sans CJK SC", serif; }
.fields > div { display: flex; height: 38px; }
.fields dt { display: flex; justify-content: space-between; width: 90px; white-space: nowrap; }
.fields dd { flex: 1; margin: 0; height: 32px; border-bottom: 1px solid #000; }
.vscroll { width: 14px; flex: none; display: flex; flex-direction: column; background: #e8e9ef; }
.vscroll svg { width: 14px; fill: #8492ad; flex: none; }
.vscroll .tip { height: 18px; background: #f5f6f8; }
.arr { height: 18px; }
.vscroll .thumb { width: 12px; height: 42px; margin: 3px 1px 0; border-radius: 6px; background: #d2d5de; }
.low { height: 76px; margin-top: auto; }
.low rect { fill: none; stroke: #8492ad; }
.hscroll { display: flex; align-items: center; height: 14px; flex: none; background: #e8e9ef; padding: 0 7px; }
.hscroll .tl, .hscroll .tr { border: 3px solid transparent; }
.hscroll .tl { border-right: 4px solid #8492ad; border-left: 0; }
.hscroll .tr { border-left: 4px solid #8492ad; border-right: 0; }
.hscroll .thumb { width: 556px; height: 12px; margin: 0 auto 0 10px; border-radius: 6px; background: #d2d5de; }
.writer > .hscroll { padding-right: 21px; }

.status { display: flex; align-items: center; height: 29px; flex: none; background: #f5f6f8; border-top: 1px solid #dfe1e6; padding: 0 11px 0 2px; position: relative; }
.trial { width: 101px; height: 22px; background: #417ffa; color: #fff; border-radius: 2px; text-align: center; line-height: 22px; }
.ssep { width: 1px; height: 14px; background: #dcdee3; margin: 0 0 0 2px; flex: none; }
.pages { margin: 0 3px 0 9px; }
.eye { margin-left: 68px; }
.ssep.e { margin-left: 9px; }
.views { display: flex; gap: 2px; margin-left: 11px; }
.views .on { background: #dce0e8; }
.zoom { display: flex; align-items: center; margin-left: auto; color: #3f485c; }
.zoom .fit { margin: 0 4px 0 10px; }
.zoom .dd { margin: 0 4px 0 3px; }
.zoom > .ic { stroke: #2f3a55; }
.slider { width: 130px; height: 12px; margin: 0 9px; background: linear-gradient(#46546f, #46546f) 0 5px / 65px 1px no-repeat, linear-gradient(#cfd3db, #cfd3db) 0 5px / 130px 1px no-repeat; display: flex; justify-content: center; }
.slider::after { content: ""; width: 12px; height: 12px; border: 1px solid #555; border-radius: 50%; background: #f0f0f0; }
.slider + .ic { margin-right: 1px; }
.sheet .status { padding-left: 1px; }
.sheet .js { margin: 0 auto 0 11px; }
.sheet .eye { margin-left: 0; }
.sheet .status .views { margin-left: 10px; }
.sheet .zoom { margin-left: 7px; }
.sheet .zoom > span { margin-left: 11px; }
.sheet .ssep.e { margin-left: 12px; }
.sheet .status > .dd { margin-left: -1px; }

.formula { display: flex; align-items: center; height: 44px; flex: none; background: #f5f6f8; padding: 4px 0 0 8px; }
.namebox { display: flex; width: 149px; height: 24px; border: 1px solid #d4d7de; border-radius: 2px; background: #fff; line-height: 22px; padding-left: 56px; justify-content: space-between; padding-right: 1px; }
.namebox .dd { height: 22px; }
.formula .ic { margin-left: 42px; }
.fx { width: 28px; margin-left: 7px; font: italic 300 18px/22px "Noto Sans", "Open Sans", sans-serif; color: #3a4256; letter-spacing: -.5px; }
.input { flex: 1; height: 24px; margin-right: 1px; border: 1px solid #d4d7de; border-radius: 2px; background: #fff; margin-left: -5px; }
.gridarea { display: flex; flex: 1; min-height: 0; background: #f5f6f8; }
.gridmain { width: 699px; overflow: hidden; display: flex; flex-direction: column; }
.colheads { display: flex; height: 19px; flex: none; border-bottom: 1px solid #9aa8c6; font: 300 15px/19px "Noto Serif CJK SC", "Liberation Serif", serif; color: #333; }
.colheads span { flex: none; text-align: center; padding-right: 1px; background: linear-gradient(#f5f6f8, #9aa8c6) right / 1px 100% no-repeat; }
.colheads .sel { background: #d0d3db; color: #21ba7d; box-shadow: 0 -2px #21ba7d inset; height: 19px; position: relative; }
.allsel { width: 34px; flex: none; background: linear-gradient(#f5f6f8, #9aa8c6) right / 1px 100% no-repeat; display: flex; justify-content: flex-end; padding: 5px 4px 0 0; }
.allsel::after { content: ""; width: 10px; height: 10px; background: linear-gradient(135deg, transparent 50%, #b5b5b5 50%); }
.gridbody { display: flex; flex: 1; min-height: 0; }
.rowheads { width: 34px; flex: none; border-right: 1px solid #9aa8c6; font: 300 16px/16px "Noto Serif CJK SC", "Liberation Serif", serif; color: #333; overflow: hidden; }
.rowheads span { display: flex; align-items: center; justify-content: center; background: linear-gradient(90deg, #f5f6f8, #9aa8c6) bottom / 100% 1px no-repeat; }
.rowheads .sel { background: #d0d3db; color: #21ba7d; box-shadow: inset -1px 0 #21ba7d; }
.cells { position: relative; width: 665px; overflow: hidden; background: #fff; font: 13px/16px "Noto Sans CJK SC", sans-serif; color: #000; flex: none; }
.r1 { display: flex; gap: 21.5px; height: 43px; margin-left: 572px; padding-left: 24px; border-bottom: 3px double #000; font-size: 24px; font-weight: 500; line-height: 40px; white-space: nowrap; }
.r2 { height: 31px; border-bottom: 2px solid #000; }
.thead { display: grid; grid-template-rows: 19px 19px; background: #f0f0f0; }
.thead span { display: flex; align-items: center; justify-content: center; white-space: nowrap; padding-bottom: 2px; }
.thead .end { justify-content: flex-end; padding-right: 3px; }
.trow { display: grid; height: 19px; }
.trow.last { height: 20px; border-bottom: 2px solid #000; }
.cells span { --r: none; --b: none; }
.thead span, .trow span { background: var(--r) right top / 1px 100% no-repeat, var(--b) left bottom / 100% 1px no-repeat; }
.cells .s { --r: linear-gradient(#000, #000); }
.cells .d { --r: repeating-linear-gradient(#000 0 3px, transparent 3px 5px); }
.cells .bd { --b: repeating-linear-gradient(90deg, #000 0 3px, transparent 3px 5px); }
.cells .bs { --b: linear-gradient(#000, #000); }
.cells .w { border-right: 3px double #000; margin-right: -1px; position: relative; }
.cursor { position: absolute; left: 62px; top: 434px; width: 32px; height: 22px; border: 3px solid #21ba7d; }
.cursor::after { content: ""; position: absolute; right: -4px; bottom: -4px; width: 5px; height: 5px; background: #21ba7d; border: solid #fff; border-width: 1px 0 0 1px; box-sizing: content-box; }
.sheet .vscroll { margin-left: auto; }
.split { height: 14px; background: linear-gradient(#8fa0bb, #8fa0bb) 2px 5px / 10px 1px no-repeat, linear-gradient(#8fa0bb, #8fa0bb) 2px 8px / 10px 1px no-repeat, #f5f6f8; }
.sheet .vscroll .thumb { height: 543px; }
.sheet .end { margin-top: auto; }
.sheettabs { display: flex; height: 22px; flex: none; background: #f5f6f8; border-top: 1px solid #dfe1e6; align-items: center; }
.navs { display: flex; gap: 10px; padding-left: 12px; width: 119px; }
.navs svg, .addtab { width: 16px; height: 16px; fill: none; stroke: #a0a5b0; }
.tabname { width: 93px; height: 22px; margin-top: -1px; background: #fff; border: solid #dfe1e6; border-width: 0 1px; color: #21ba7d; text-align: center; line-height: 26px; padding-left: 3px; }
.addtab { margin-left: 3px; stroke: #3f4a60; }
.grip { width: 4px; height: 10px; border: solid #8fa0bb; border-width: 0 1px; margin-left: 175px; }
.sheettabs .hscroll { width: 269px; margin-left: 6px; }
.sheettabs .thumb { width: 66px; }
.sheettabs .hscroll + .grip { margin-left: 5px; }

.taskbar { display: flex; justify-content: space-between; height: 40px; position: relative; background: radial-gradient(ellipse 220px 60px at 240px 30px, rgba(90,185,130,.9), rgba(90,185,130,0)), linear-gradient(90deg, #60756f, #61877a 420px, #5f8376 1000px, #6b8480 1200px, #6f7f85); }
.dock, .tray { display: flex; align-items: center; }
.dock { padding-left: 2px; }
.dock > span { width: 32px; height: 32px; margin-right: 4px; border-radius: 7px; display: flex; align-items: center; justify-content: center; }
.dock svg { width: 24px; height: 24px; }
.dock .run { background: rgba(60,80,75,.5); }
.dock .active { background: #131a18; }
.tsep { width: 2px; height: 20px; background: #33403d; }
.dock .tsep { margin: 0 2px 0 -2px; }
.daynum { font: 700 10px "Open Sans", sans-serif; fill: #222; }
.tray svg { width: 20px; height: 20px; margin-left: 10px; }
.tray .s2 { margin-left: 10px; }
.tray .tsep + svg { margin-left: 11px; }
.tray .s2 + svg { margin-left: 10px; }
.clock { width: 56px; margin-left: 10px; text-align: center; color: #000; font: 10px/11px "Noto Sans", sans-serif; padding-top: 1px; }
.clock b { display: block; font: 16px/18px "Noto Sans", sans-serif; }
.clock span { white-space: nowrap; display: block; }
.tray .bell { margin: 0 11px 0 10px; }
.peek { width: 9px; height: 40px; background: rgba(255,255,255,.12); }
```
